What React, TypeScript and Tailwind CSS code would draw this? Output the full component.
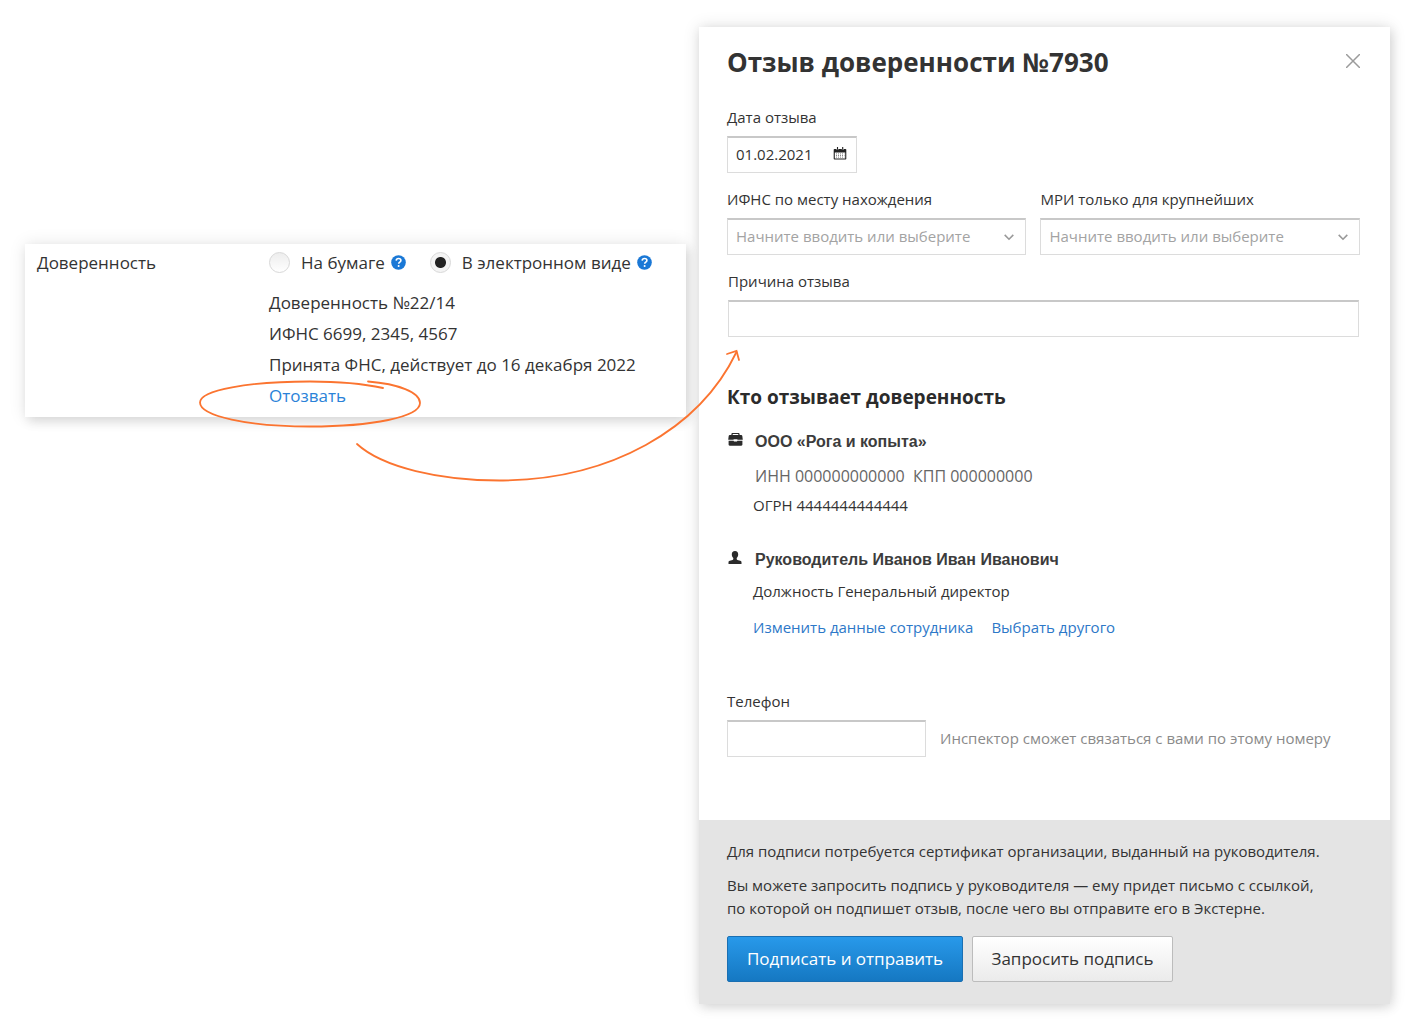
import { ReactNode } from "react";

const text = "text-[15px] leading-[22px] text-[#333]";
const control = "w-full h-[37px] bg-white border border-[#dcdcdc] border-t-2 border-t-[#c8c8c8] px-2 pb-0.5 text-[15px] outline-none";
const link = "text-[#2d78c8] hover:underline";

export default function App() {
    return <div className="relative min-h-screen bg-white font-['Open_Sans','Noto_Sans',sans-serif]">
        <div className="grid grid-cols-[661fr_691fr] items-start gap-x-[13px] pt-[27px] pb-7 pl-[25px] pr-7">
            <Proxy />
            <RevokeDialog />
        </div>
        <Arrow />
    </div>
}

function Proxy() {
    return <section className="mt-[217px] flex bg-white pl-3 pt-[3px] pb-1.5 text-[17px] leading-[31px] text-[#333] shadow-[0_0_16px_rgba(0,0,0,0.1),3px_5px_10px_rgba(0,0,0,0.1)]">
        <div className="w-[232px] shrink-0">Доверенность</div>
        <div>
            <div className="flex gap-6">
                <Radio id="paper" label="На бумаге" />
                <Radio id="electronic" label="В электронном виде" checked />
            </div>
            <div className="mt-[9px]">
                <p>Доверенность №22/14</p>
                <p>ИФНС 6699, 2345, 4567</p>
                <p>Принята ФНС, действует до 16 декабря 2022</p>
                <a href="#revoke" className="text-[#2a82d8]">Отозвать</a>
            </div>
        </div>
    </section>
}

function Radio({ id, label, checked = false }: { id: string, label: string, checked?: boolean }) {
    return <div className="flex items-center">
        <input
            type="radio"
            name="format"
            id={id}
            defaultChecked={checked}
            className="size-[21px] shrink-0 appearance-none rounded-full border border-[#d8d8d8] bg-linear-to-b from-[#ededed] to-white checked:bg-[radial-gradient(circle,#222_5px,#f4f4f4_6px)]"
        />
        <label htmlFor={id} className="ml-[11px]">{label}</label>
        <button type="button" aria-label="Справка" className="ml-1.5">
            <svg width="15" height="15" viewBox="0 0 15 15" fill="none">
                <circle cx="7.5" cy="7.5" r="7.3" fill="#1a78d6" />
                <path d="M5.2 5.6C5.3 4.2 6.2 3.5 7.6 3.5c1.4 0 2.3.8 2.3 1.9 0 1.7-2.2 1.7-2.2 3.3" stroke="#fff" strokeWidth="1.6" />
                <circle cx="7.6" cy="10.9" r="1" fill="#fff" />
            </svg>
        </button>
    </div>
}

function RevokeDialog() {
    return <form className="bg-white shadow-[0_0_16px_rgba(0,0,0,0.12),2px_3px_10px_rgba(0,0,0,0.1)]">
        <div className="pl-7 pr-[30px] pt-[15px] pb-[63px]">
            <div className="flex items-start justify-between">
                <h1 className="text-[26px] leading-10 font-bold text-[#333]">Отзыв доверенности №7930</h1>
                <button type="button" aria-label="Закрыть" className="py-3">
                    <svg width="14" height="14" viewBox="0 0 14 14" stroke="#9b9b9b" strokeWidth="1.5">
                        <path d="M0 0l14 14M14 0L0 14" />
                    </svg>
                </button>
            </div>

            <div className="mt-6 flex flex-col gap-[15px]">
                <div className="w-[130px]">
                    <Field id="date" label="Дата отзыва">
                        <div className="relative">
                            <input id="date" defaultValue="01.02.2021" className={`${control} text-[#333]`} />
                            <CalendarIcon />
                        </div>
                    </Field>
                </div>
                <div className="grid grid-cols-[299fr_319fr] gap-3.5">
                    <Field id="ifns" label="ИФНС по месту нахождения"><Select id="ifns" /></Field>
                    <Field id="mri" label="МРИ только для крупнейших"><Select id="mri" /></Field>
                </div>
                <div className="px-px">
                    <Field id="reason" label="Причина отзыва">
                        <input id="reason" className={control} />
                    </Field>
                </div>
            </div>

            <h2 className="mt-[46px] text-[19px] leading-7 font-bold text-[#2b2b2b]">Кто отзывает доверенность</h2>

            <div className="mt-[19px] flex flex-col gap-8">
                <Person icon={<BriefcaseIcon />} title="ООО «Рога и копыта»">
                    <p className="mt-2.5 pl-0.5 text-base text-[#666]">ИНН 000000000000&nbsp; КПП 000000000</p>
                    <p className="mt-1.5">ОГРН 4444444444444</p>
                </Person>
                <Person icon={<UserIcon />} title="Руководитель Иванов Иван Иванович">
                    <p className="mt-2">Должность Генеральный директор</p>
                    <div className="mt-3.5 flex gap-[18px]">
                        <a href="#edit" className={link}>Изменить данные сотрудника</a>
                        <a href="#choose" className={link}>Выбрать другого</a>
                    </div>
                </Person>
            </div>

            <div className="mt-[52px]">
                <Field id="phone" label="Телефон">
                    <div className="flex items-center gap-3.5">
                        <div className="w-[199px]"><input id="phone" type="tel" className={control} /></div>
                        <span className="text-[15px] text-[#8a8a8a]">Инспектор сможет связаться с вами по этому номеру</span>
                    </div>
                </Field>
            </div>
        </div>

        <div className="bg-[#e4e4e4] px-7 pt-5 pb-[22px]">
            <p className={text}>Для подписи потребуется сертификат организации, выданный на руководителя.</p>
            <p className="mt-3 text-[15px] leading-[23px] text-[#333]">
                Вы можете запросить подпись у руководителя — ему придет письмо с ссылкой,<br />
                по которой он подпишет отзыв, после чего вы отправите его в Экстерне.
            </p>
            <div className="mt-4 flex gap-[9px] text-[17px]">
                <button type="button" className="h-[46px] w-[236px] rounded-xs border border-[#1a6fb2] bg-linear-to-b from-[#2899ea] to-[#1578c2] text-white">Подписать и отправить</button>
                <button type="button" className="h-[46px] w-[201px] rounded-xs border border-[#bcbcbc] bg-linear-to-b from-white to-[#ebebeb] text-[#333]">Запросить подпись</button>
            </div>
        </div>
    </form>
}

function Field({ id, label, children }: { id: string, label: string, children: ReactNode }) {
    return <div>
        <label htmlFor={id} className={`mb-2 block ${text}`}>{label}</label>
        {children}
    </div>
}

function Select({ id }: { id: string }) {
    return <div className="relative">
        <select id={id} className={`${control} appearance-none text-[#a3a3a3]`}>
            <option>Начните вводить или выберите</option>
        </select>
        <svg className="pointer-events-none absolute right-3 top-4" width="10" height="7" viewBox="0 0 10 7" fill="none" stroke="#999" strokeWidth="1.6">
            <path d="M.7 .9L5 5.2 9.3 .9" />
        </svg>
    </div>
}

function Person({ icon, title, children }: { icon: ReactNode, title: string, children: ReactNode }) {
    return <div className="flex">
        <div className="w-[26px] shrink-0 pt-[3px] pl-px">{icon}</div>
        <div className={text}>
            <h3 className="pl-0.5 font-['Liberation_Sans',sans-serif] text-base leading-6 font-bold text-[#3c3c3c]">{title}</h3>
            {children}
        </div>
    </div>
}

function CalendarIcon() {
    return <svg className="pointer-events-none absolute right-2.5 top-[11px]" width="14" height="13" viewBox="0 0 14 13" fill="none">
        <path d="M1.5 2h11a.8.8 0 0 1 .8.8v9a.8.8 0 0 1-.8.8h-11a.8.8 0 0 1-.8-.8v-9a.8.8 0 0 1 .8-.8z" fill="#222" />
        <path d="M1.800 5.500h10.400v6H1.800z" fill="#fff" />
        <path d="M3 6.900h8.500M3 8.500h8.500M3 10.100h8.500" stroke="#777" strokeWidth=".9" strokeDasharray="1 1" />
        <path d="M3.500 0h1.900v2.800H3.500zM8.800 0h1.900v2.800H8.800z" fill="#fff" />
        <path d="M4.500 0v2.800M9.700 0v2.800" stroke="#222" strokeWidth="1.100" />
    </svg>
}

function BriefcaseIcon() {
    return <svg width="15" height="13" viewBox="0 0 15 13" fill="#2b2b2b">
        <path d="M3.400 2V1.300C3.400.5 3.900 0 4.700 0h5.600c.8 0 1.300.5 1.300 1.300V2h1.200c.9 0 1.300.3 1.500 1l.5 3.800H9.400v-.6H5.600v.6H.2L.7 3c.2-.7.6-1 1.500-1zm1.300 0h5.600v-.9H4.700z" />
        <path d="M.6 7.700h5l.4.900h3l.4-.9h5v3.900c0 .7-.4 1.100-1.100 1.100H1.700c-.7 0-1.100-.4-1.100-1.100z" />
    </svg>
}

function UserIcon() {
    return <svg width="14" height="13" viewBox="0 0 14 13" fill="#2b2b2b">
        <path d="M7 0c2.200 0 3.200 1.300 3.200 3.200 0 1.600-.6 3-1.500 3.800v1c0 .5.2.7.7.9l2.800.9c.9.3 1.300.8 1.300 1.600V13H.5v-1.600c0-.8.4-1.300 1.300-1.600l2.800-.9c.5-.2.7-.4.7-.9V7C4.400 6.200 3.800 4.800 3.800 3.200 3.800 1.300 4.800 0 7 0z" />
    </svg>
}

// Hand-drawn circle round the link, and the arrow to the form
function Arrow() {
    return <svg className="pointer-events-none absolute left-[190px] top-[340px]" width="560" height="150" viewBox="190 340 560 150" fill="none" stroke="#fb7430" strokeWidth="1.8" strokeLinecap="round">
        <path d="M383 388C360 383 336 381.500 310 381.500C249 381.500 200 390 200 402.500C200 416 248 426.500 310 426.500C372 426.500 420 417 420 403C420 392 398 384 368 381.500" />
        <path d="M357 444C382 467 440 481 503 480.500C610 479 699 430 736.500 352" />
        <path d="M727 354L736.500 351L739 360" />
    </svg>
}
